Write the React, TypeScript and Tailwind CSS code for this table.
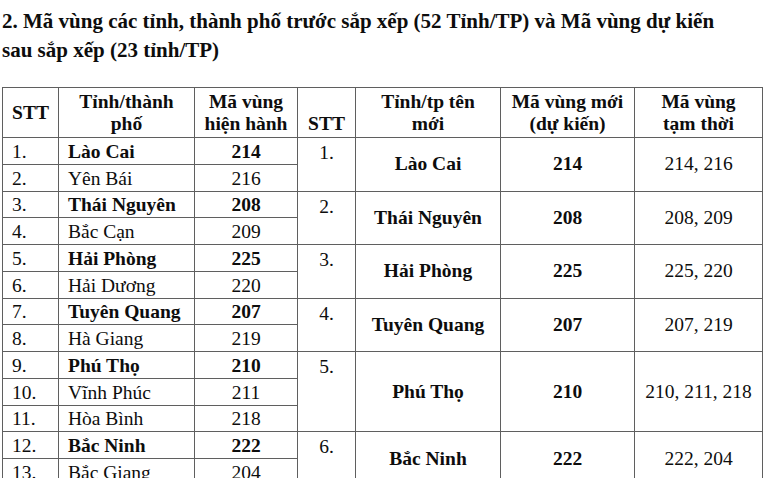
type Row = { stt: string; name: string; code: string; bold?: boolean };
type Group = { stt: string; name: string; code: string; temp: string; rows: Row[] };

const groups: Group[] = [
  {
    stt: "1.", name: "Lào Cai", code: "214", temp: "214, 216",
    rows: [
      { stt: "1.", name: "Lào Cai", code: "214", bold: true },
      { stt: "2.", name: "Yên Bái", code: "216" },
    ],
  },
  {
    stt: "2.", name: "Thái Nguyên", code: "208", temp: "208, 209",
    rows: [
      { stt: "3.", name: "Thái Nguyên", code: "208", bold: true },
      { stt: "4.", name: "Bắc Cạn", code: "209" },
    ],
  },
  {
    stt: "3.", name: "Hải Phòng", code: "225", temp: "225, 220",
    rows: [
      { stt: "5.", name: "Hải Phòng", code: "225", bold: true },
      { stt: "6.", name: "Hải Dương", code: "220" },
    ],
  },
  {
    stt: "4.", name: "Tuyên Quang", code: "207", temp: "207, 219",
    rows: [
      { stt: "7.", name: "Tuyên Quang", code: "207", bold: true },
      { stt: "8.", name: "Hà Giang", code: "219" },
    ],
  },
  {
    stt: "5.", name: "Phú Thọ", code: "210", temp: "210, 211, 218",
    rows: [
      { stt: "9.", name: "Phú Thọ", code: "210", bold: true },
      { stt: "10.", name: "Vĩnh Phúc", code: "211" },
      { stt: "11.", name: "Hòa Bình", code: "218" },
    ],
  },
  {
    stt: "6.", name: "Bắc Ninh", code: "222", temp: "222, 204",
    rows: [
      { stt: "12.", name: "Bắc Ninh", code: "222", bold: true },
      { stt: "13.", name: "Bắc Giang", code: "204" },
    ],
  },
];

const cell = "border border-[#5f5f5f] p-0";

export default function App() {
  return (
    <div className="w-[764px] h-[478px] overflow-hidden bg-white text-[#0d0d0d] font-['Liberation_Serif','Times_New_Roman',serif]">
      <h2 className="pt-[7px] pl-[2px] text-[21px] leading-[29px] font-bold">
        2. Mã vùng các tỉnh, thành phố trước sắp xếp (52 Tỉnh/TP) và Mã vùng dự kiến
        <br />
        sau sắp xếp (23 tỉnh/TP)
      </h2>

      <table className="mt-[22px] ml-[2px] w-[760px] border-collapse table-fixed text-[19.5px] leading-[22px]">
        <colgroup>
          <col className="w-[56px]" />
          <col className="w-[136px]" />
          <col className="w-[103px]" />
          <col className="w-[58px]" />
          <col className="w-[145px]" />
          <col className="w-[134px]" />
          <col className="w-[128px]" />
        </colgroup>
        <thead>
          <tr className="h-[50px] font-bold text-center">
            <th className={`${cell} align-middle`}>STT</th>
            <th className={`${cell} align-bottom pb-[2px]`}>Tỉnh/thành<br />phố</th>
            <th className={`${cell} align-bottom pb-[2px]`}>Mã vùng<br />hiện hành</th>
            <th className={`${cell} align-bottom pb-[2px]`}>STT</th>
            <th className={`${cell} align-bottom pb-[2px]`}>Tỉnh/tp tên<br />mới</th>
            <th className={`${cell} align-bottom pb-[2px]`}>Mã vùng mới<br />(dự kiến)</th>
            <th className={`${cell} align-bottom pb-[2px]`}>Mã vùng<br />tạm thời</th>
          </tr>
        </thead>
        <tbody>
          {groups.map((g) =>
            g.rows.map((r, i) => (
              <tr key={r.stt} className="h-[26.75px]">
                <td className={`${cell} pl-[9px] pt-[2px] align-middle`}>{r.stt}</td>
                <td className={`${cell} pl-[9px] pt-[2px] align-middle ${r.bold ? "font-bold" : ""}`}>{r.name}</td>
                <td className={`${cell} text-center pt-[2px] align-middle ${r.bold ? "font-bold" : ""}`}>{r.code}</td>
                {i === 0 && (
                  <>
                    <td rowSpan={g.rows.length} className={`${cell} text-center align-top pt-[4px]`}>{g.stt}</td>
                    <td rowSpan={g.rows.length} className={`${cell} text-center align-middle font-bold`}>{g.name}</td>
                    <td rowSpan={g.rows.length} className={`${cell} text-center align-middle font-bold`}>{g.code}</td>
                    <td rowSpan={g.rows.length} className={`${cell} text-center align-middle`}>{g.temp}</td>
                  </>
                )}
              </tr>
            ))
          )}
        </tbody>
      </table>
    </div>
  );
}
